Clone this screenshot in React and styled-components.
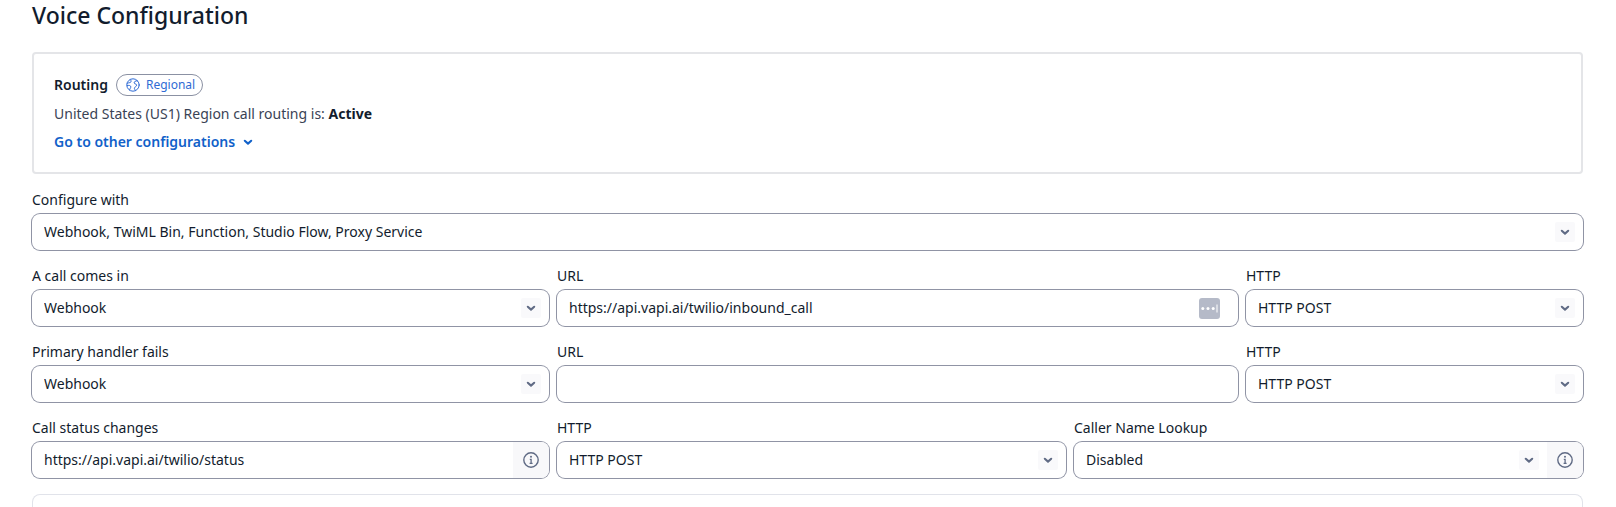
import React, { useId, useState } from "react";
import styled, { createGlobalStyle } from "styled-components";

const GlobalStyle = createGlobalStyle`
    * {
        box-sizing: border-box;
    }
    body {
        margin: 0;
        background: #ffffff;
        color: #121c2d;
        font-family: "Noto Sans", "Open Sans", sans-serif;
        font-size: 14px;
        line-height: 20px;
    }
`;

const callHandlers = ["Webhook", "TwiML Bin", "Function", "Studio Flow"];
const httpMethods = ["HTTP POST", "HTTP GET"];

const ChevronIcon = () => (
    <svg width='10' height='10' viewBox='0 0 10 10' fill='none' aria-hidden='true'>
        <path
            d='M1.8 3.8 L5 6.6 L8.2 3.8'
            stroke='currentColor'
            strokeWidth='2.1'
            strokeLinecap='round'
            strokeLinejoin='round'
        />
    </svg>
);

const GlobeIcon = () => (
    <svg width='14' height='14' viewBox='0 0 14 14' fill='none' aria-hidden='true'>
        <g stroke='currentColor' strokeWidth='1' strokeLinecap='round' strokeLinejoin='round'>
            <circle cx='7' cy='7' r='6.2' />
            <path d='M4.4 1.6 C5.6 3 5.2 4.4 3.8 4.6 C2.6 4.8 2 5 1.2 5.2' />
            <path d='M1.2 7.6 C2.6 7 4.8 7.4 4.8 8.8 C4.8 10.2 3.8 10.4 3.6 12' />
            <path d='M11.4 2.8 C9.6 2.6 7.8 3.6 8.2 5 C8.6 6.4 10.6 5.6 10.6 7.2 C10.6 8.8 8.4 8.6 8.4 10.4 C8.4 11.6 9.2 12 9.6 12.4' />
        </g>
    </svg>
);

const InfoIcon = () => (
    <svg width='16' height='16' viewBox='0 0 16 16' fill='none' aria-hidden='true'>
        <circle cx='8' cy='8' r='7.2' stroke='currentColor' strokeWidth='1.4' />
        <circle cx='8' cy='4.8' r='1' fill='currentColor' />
        <path d='M6.8 7.4 H8.1 V11.2 M6.6 11.3 H9.6' stroke='currentColor' strokeWidth='1.3' />
    </svg>
);

const FillIcon = () => (
    <svg width='21' height='21' viewBox='0 0 21 21' aria-hidden='true'>
        <rect width='21' height='21' rx='3' fill='#b5bac8' />
        <circle cx='3.8' cy='10.5' r='1.5' fill='#ffffff' />
        <circle cx='9' cy='10.5' r='1.5' fill='#ffffff' />
        <circle cx='14.2' cy='10.5' r='1.5' fill='#ffffff' />
        <rect x='17.5' y='6.5' width='1' height='8' fill='#ffffff' />
    </svg>
);

const SelectField = ({ label, options, info }) => {
    const id = useId();
    const [value, setValue] = useState(options[0]);
    return (
        <Field>
            <Label htmlFor={id}>{label}</Label>
            <Control>
                <SelectBox>
                    <Select id={id} value={value} onChange={(e) => setValue(e.target.value)}>
                        {options.map((option) => (
                            <option key={option}>{option}</option>
                        ))}
                    </Select>
                    <ChevronBox>
                        <ChevronIcon />
                    </ChevronBox>
                </SelectBox>
                {info && (
                    <InfoButton type='button' aria-label={info}>
                        <InfoIcon />
                    </InfoButton>
                )}
            </Control>
        </Field>
    );
};

const TextField = ({ label, initial = "", info, autofill }) => {
    const id = useId();
    const [value, setValue] = useState(initial);
    return (
        <Field>
            <Label htmlFor={id}>{label}</Label>
            <Control>
                <Input id={id} type='text' value={value} onChange={(e) => setValue(e.target.value)} />
                {autofill && (
                    <FillButton type='button' aria-label='Autofill'>
                        <FillIcon />
                    </FillButton>
                )}
                {info && (
                    <InfoButton type='button' aria-label={info}>
                        <InfoIcon />
                    </InfoButton>
                )}
            </Control>
        </Field>
    );
};

const App = () => {
    return (
        <>
            <GlobalStyle />
            <Page>
                <Title>Voice Configuration</Title>
                <RoutingCard>
                    <RoutingHeader>
                        <RoutingTitle>Routing</RoutingTitle>
                        <Badge>
                            <GlobeIcon />
                            Regional
                        </Badge>
                    </RoutingHeader>
                    <RoutingText>
                        United States (US1) Region call routing is: <strong>Active</strong>
                    </RoutingText>
                    <LinkButton type='button'>
                        Go to other configurations
                        <ChevronIcon />
                    </LinkButton>
                </RoutingCard>
                <Form>
                    <SelectField
                        label='Configure with'
                        options={[
                            "Webhook, TwiML Bin, Function, Studio Flow, Proxy Service",
                            "SIP Trunk",
                        ]}
                    />
                    <Row $columns='517fr 681fr 337fr'>
                        <SelectField label='A call comes in' options={callHandlers} />
                        <TextField
                            label='URL'
                            initial='https://api.vapi.ai/twilio/inbound_call'
                            autofill
                        />
                        <SelectField label='HTTP' options={httpMethods} />
                    </Row>
                    <Row $columns='517fr 681fr 337fr'>
                        <SelectField label='Primary handler fails' options={callHandlers} />
                        <TextField label='URL' />
                        <SelectField label='HTTP' options={httpMethods} />
                    </Row>
                    <Row $columns='517fr 509fr 509fr'>
                        <TextField
                            label='Call status changes'
                            initial='https://api.vapi.ai/twilio/status'
                            info='About call status changes'
                        />
                        <SelectField label='HTTP' options={httpMethods} />
                        <SelectField
                            label='Caller Name Lookup'
                            options={["Disabled", "Enabled"]}
                            info='About caller name lookup'
                        />
                    </Row>
                </Form>
                <NextPanel />
            </Page>
        </>
    );
};

const Page = styled.main`
    display: flex;
    flex-direction: column;
    height: 100vh;
    padding: 0 33px 0 32px;
    overflow: hidden;
`;
const Title = styled.h2`
    margin: 0 0 22px;
    font-size: 23px;
    line-height: 30px;
    font-weight: 500;
`;
const RoutingCard = styled.section`
    display: flex;
    flex-direction: column;
    align-items: flex-start;
    gap: 8px;
    padding: 20px;
    border: 2px solid #e4e5e8;
    border-radius: 4px;
`;
const RoutingHeader = styled.div`
    display: flex;
    align-items: center;
    gap: 8px;
`;
const RoutingTitle = styled.h3`
    margin: 0;
    font-size: 14px;
    font-weight: 600;
`;
const Badge = styled.span`
    display: flex;
    align-items: center;
    gap: 6px;
    padding: 0 7px 0 9px;
    border: 1px solid #8b91a3;
    border-radius: 11px;
    color: #2f6bd4;
    font-size: 12px;
`;
const RoutingText = styled.p`
    margin: 0;
    color: #3a4355;

    strong {
        color: #121c2d;
        font-weight: 700;
    }
`;
const LinkButton = styled.button`
    display: flex;
    align-items: center;
    gap: 8px;
    padding: 0;
    border: 0;
    background: none;
    color: #1161c9;
    font: inherit;
    font-weight: 600;
    cursor: pointer;
`;
const Form = styled.form`
    display: grid;
    gap: 16px;
    padding: 16px 0;
`;
const Row = styled.div`
    display: grid;
    grid-template-columns: ${({ $columns }) => $columns};
    gap: 8px;
`;
const Field = styled.div`
    display: grid;
    gap: 4px;
    min-width: 0;
`;
const Label = styled.label`
    justify-self: start;
`;
const Control = styled.div`
    display: flex;
    align-items: center;
    height: 36px;
    border-radius: 8px;
    box-shadow: 0 0 0 1px #9094a5;
    overflow: hidden;
`;
const SelectBox = styled.div`
    display: grid;
    flex: 1;
    align-items: center;

    > * {
        grid-area: 1 / 1;
    }
`;
const Select = styled.select`
    width: 100%;
    height: 36px;
    padding: 0 32px 0 12px;
    border: 0;
    outline: 0;
    background: none;
    color: inherit;
    font: inherit;
    appearance: none;
`;
const ChevronBox = styled.span`
    display: grid;
    place-items: center;
    justify-self: end;
    width: 20px;
    height: 20px;
    margin-right: 8px;
    border-radius: 2px;
    background: #f9f9fb;
    color: #606b85;
    pointer-events: none;
`;
const Input = styled.input`
    flex: 1;
    min-width: 0;
    height: 36px;
    padding: 0 12px 2px;
    border: 0;
    outline: 0;
    background: none;
    color: inherit;
    font: inherit;
`;
const InfoButton = styled.button`
    display: grid;
    place-items: center;
    width: 36px;
    height: 36px;
    padding: 0;
    border: 0;
    background: #f8f8fa;
    color: #606b85;
    cursor: pointer;
`;
const FillButton = styled.button`
    display: grid;
    margin-right: 18px;
    padding: 0;
    border: 0;
    background: none;
    cursor: pointer;
`;
const NextPanel = styled.section`
    flex: 1;
    border: 1px solid #e1e3ea;
    border-bottom: 0;
    border-radius: 8px 8px 0 0;
`;

export default App;
